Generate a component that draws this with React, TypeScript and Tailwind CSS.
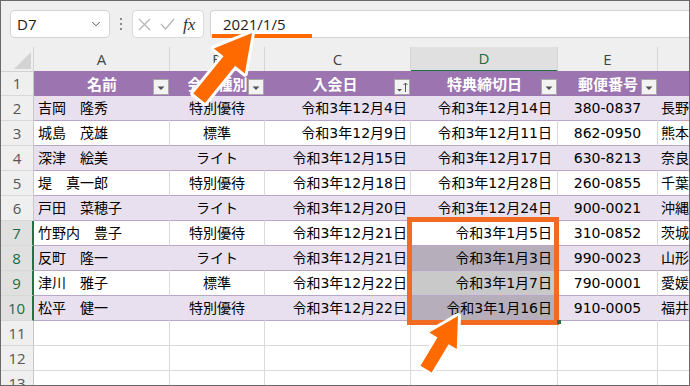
import React from "react";
import { ChevronDown } from "lucide-react";

const GRID = "grid grid-cols-[33px_136px_95px_146px_147px_100px_1fr]";

const rows: string[][] = [
  ["吉岡　隆秀", "特別優待", "令和3年12月4日", "令和3年12月14日", "380-0837", "長野県"],
  ["城島　茂雄", "標準", "令和3年12月9日", "令和3年12月11日", "862-0950", "熊本県"],
  ["深津　絵美", "ライト", "令和3年12月15日", "令和3年12月17日", "630-8213", "奈良県"],
  ["堤　真一郎", "特別優待", "令和3年12月18日", "令和3年12月28日", "260-0855", "千葉県"],
  ["戸田　菜穂子", "ライト", "令和3年12月20日", "令和3年12月24日", "900-0021", "沖縄県"],
  ["竹野内　豊子", "特別優待", "令和3年12月21日", "令和3年1月5日", "310-0852", "茨城県"],
  ["反町　隆一", "ライト", "令和3年12月21日", "令和3年1月3日", "990-0023", "山形県"],
  ["津川　雅子", "標準", "令和3年12月22日", "令和3年1月7日", "790-0001", "愛媛県"],
  ["松平　健一", "特別優待", "令和3年12月22日", "令和3年1月16日", "910-0005", "福井県"],
];

function arrowPoints(L: number, hl: number, hw: number, sw: number) {
  const p = [
    [0, 0],
    [-hl, -hw / 2],
    [-hl, -sw / 2],
    [-L, -sw / 2],
    [-L, sw / 2],
    [-hl, sw / 2],
    [-hl, hw / 2],
  ];
  return p.map((q) => q.join(",")).join(" ");
}

function FilterBtn({ sort }: { sort?: boolean }) {
  return (
    <div className="absolute right-[1px] bottom-[1px] w-[16px] h-[16px] bg-[#f3f3f3] border border-[#a8a8a8] flex items-center justify-center">
      {sort ? (
        <svg width="14" height="14" viewBox="0 0 14 14">
          <polygon points="2,9 7,9 4.5,11.5" fill="#555" />
          <line x1="10.5" y1="3" x2="10.5" y2="12" stroke="#555" strokeWidth="1" />
          <polyline points="8.5,5 10.5,3 12.5,5" fill="none" stroke="#555" strokeWidth="1" />
        </svg>
      ) : (
        <svg width="14" height="14" viewBox="0 0 14 14">
          <polygon points="3.5,6.5 10.5,6.5 7,10" fill="#555" />
        </svg>
      )}
    </div>
  );
}

const CELLFONT = "font-['DejaVu_Sans','Noto_Sans_CJK_JP',sans-serif] text-[14px] leading-none text-black";
const UIFONT = "font-['Open_Sans','Noto_Sans',sans-serif]";

export default function App() {
  return (
    <div className="relative w-[690px] h-[386px] overflow-hidden bg-[#6a6a6a] p-[1px]">
      <div className="w-full h-full overflow-hidden bg-white flex flex-col">
        {/* Toolbar */}
        <div className="h-[46px] shrink-0 bg-[#efefef] flex items-start pt-[9px]">
          <div className={`ml-[9px] w-[100px] h-[28px] bg-white border border-[#d4d4d4] rounded-[4px] flex items-center justify-between pl-[6px] pr-[6px] ${UIFONT} text-[15px] text-[#222]`}>
            <span>D7</span>
            <ChevronDown size={14} strokeWidth={1.6} color="#444" />
          </div>
          <div className="w-[22px] h-[28px] flex flex-col items-center justify-center gap-[3px]">
            <div className="w-[2px] h-[2px] bg-[#8a8a8a]" />
            <div className="w-[2px] h-[2px] bg-[#8a8a8a]" />
            <div className="w-[2px] h-[2px] bg-[#8a8a8a]" />
          </div>
          <div className="w-[72px] h-[28px] bg-white border border-[#d9d9d9] rounded-[4px] flex items-center pl-[5px] gap-[9px]">
            <svg width="13" height="13" viewBox="0 0 13 13">
              <path d="M1 1 L12 12 M12 1 L1 12" stroke="#b4b4b4" strokeWidth="1.2" />
            </svg>
            <svg width="15" height="12" viewBox="0 0 15 12">
              <path d="M1 6 L5.5 11 L14 1" stroke="#b4b4b4" strokeWidth="1.2" fill="none" />
            </svg>
            <span className="font-['Liberation_Serif',serif] italic text-[17px] leading-none text-[#333] -ml-[1px]">fx</span>
          </div>
          <div className="w-[6px]" />
          <div className={`flex-1 h-[28px] bg-white border border-r-0 border-[#d4d4d4] rounded-l-[4px] flex items-center pl-[12px] ${UIFONT} text-[15px] text-[#222]`}>
            2021/1/5
          </div>
        </div>

        {/* Column headers */}
        <div className={`${GRID} h-[24px] shrink-0 bg-[#efefef] ${UIFONT} text-[15px] text-[#444]`}>
          <div className="relative border-r border-b border-[#d2d2d2]">
            <svg className="absolute right-[1px] bottom-[1px]" width="19" height="19" viewBox="0 0 19 19">
              <polygon points="18,1 18,18 1,18" fill="#d3d3d3" />
            </svg>
          </div>
          {["A", "B", "C"].map((c) => (
            <div key={c} className="flex items-center justify-center border-r border-b border-[#d6d6d6]">
              {c}
            </div>
          ))}
          <div className="flex items-center justify-center bg-[#e0e0e0] border-r border-r-[#d6d6d6] border-b-2 border-b-[#217346] text-[#1d6b44]">
            D
          </div>
          <div className="flex items-center justify-center border-r border-b border-[#d6d6d6]">E</div>
          <div className="border-b border-[#d6d6d6]" />
        </div>

        {/* Row 1 header */}
        <div className={`${GRID} h-[25px] shrink-0`}>
          <div className={`flex items-center justify-center bg-[#efefef] border-r border-r-[#c8c8c8] border-b border-b-[#d8d8d8] ${UIFONT} text-[15px] text-[#555]`}>
            1
          </div>
          {[
            ["名前", false],
            ["会員種別", false],
            ["入会日", true],
            ["特典締切日", false],
            ["郵便番号", false],
          ].map(([t, s], i) => (
            <div
              key={i}
              className="relative flex items-center justify-center bg-[#9b74b0] font-['Noto_Sans_CJK_JP',sans-serif] font-bold text-[15px] leading-none text-white"
            >
              <span className={i === 2 ? "-ml-[6px]" : ""}>{t as string}</span>
              <FilterBtn sort={s as boolean} />
            </div>
          ))}
          <div className="bg-[#9b74b0]" />
        </div>

        {/* Data rows */}
        {rows.map((r, i) => {
          const num = i + 2;
          const band = i % 2 === 0;
          const sel = num >= 7;
          const base = band
            ? "bg-[#e8e0ef] border-r border-r-transparent"
            : "bg-white border-r border-r-[#dadada]";
          const dBg =
            num === 8 || num === 10
              ? "bg-[#b7aebb] border-r border-r-transparent"
              : num === 9
              ? "bg-[#c9c9c9] border-r border-r-transparent"
              : base;
          return (
            <div key={i} className={`${GRID} h-[25px] shrink-0 ${CELLFONT}`}>
              <div
                className={`flex items-center justify-center border-b border-b-[#d8d8d8] ${UIFONT} text-[15px] ${
                  sel
                    ? "bg-[#e0e0e0] text-[#1d6b44] border-r-2 border-r-[#217346]"
                    : "bg-[#efefef] text-[#555] border-r border-r-[#c8c8c8]"
                }`}
              >
                {num}
              </div>
              <div className={`flex items-center pl-[4px] whitespace-nowrap border-b border-b-[#b9a7cb] ${base}`}>{r[0]}</div>
              <div className={`flex items-center justify-center whitespace-nowrap border-b border-b-[#b9a7cb] ${base}`}>{r[1]}</div>
              <div className={`flex items-center justify-end pr-[3px] whitespace-nowrap border-b border-b-[#b9a7cb] ${base}`}>{r[2]}</div>
              <div className={`flex items-center justify-end pr-[5px] whitespace-nowrap border-b border-b-[#b9a7cb] ${dBg}`}>{r[3]}</div>
              <div className={`flex items-center justify-center whitespace-nowrap border-b border-b-[#b9a7cb] ${base}`}>{r[4]}</div>
              <div className={`flex items-center pl-[3px] whitespace-nowrap overflow-hidden border-b border-b-[#b9a7cb] ${band ? "bg-[#e8e0ef]" : "bg-white"}`}>
                {r[5]}
              </div>
            </div>
          );
        })}

        {/* Empty rows */}
        {[11, 12, 13].map((n) => (
          <div key={n} className={`${GRID} h-[25px] shrink-0`}>
            <div className={`flex items-center justify-center bg-[#efefef] text-[#555] border-r border-r-[#c8c8c8] border-b border-b-[#d8d8d8] ${UIFONT} text-[15px]`}>
              {n}
            </div>
            {[0, 1, 2, 3, 4].map((k) => (
              <div key={k} className="border-r border-b border-[#dadada]" />
            ))}
            <div className="border-b border-[#dadada]" />
          </div>
        ))}
      </div>

      {/* Annotations */}
      <div className="absolute left-[212px] top-[34px] w-[100px] h-[4px] bg-[#ff6a00]" />
      <div className="absolute left-[407px] top-[217px] w-[152px] h-[108px] border-[5px] border-[#f26b23]" />
      <div className="absolute left-[557px] top-[320px] w-[4px] h-[4px] bg-[#217346]" />
      <svg className="absolute left-0 top-0 pointer-events-none" width="690" height="386" viewBox="0 0 690 386">
        <g transform="translate(252,33) rotate(-51)">
          <polygon
            points={arrowPoints(84, 36, 40, 15)}
            fill="#ff6a00"
            stroke="#ffffff"
            strokeWidth="6"
            strokeLinejoin="round"
            paintOrder="stroke"
          />
        </g>
        <g transform="translate(458,316) rotate(-59)">
          <polygon
            points={arrowPoints(62, 29, 32, 13)}
            fill="#ff6a00"
            stroke="#ffffff"
            strokeWidth="6"
            strokeLinejoin="round"
            paintOrder="stroke"
          />
        </g>
      </svg>
    </div>
  );
}
